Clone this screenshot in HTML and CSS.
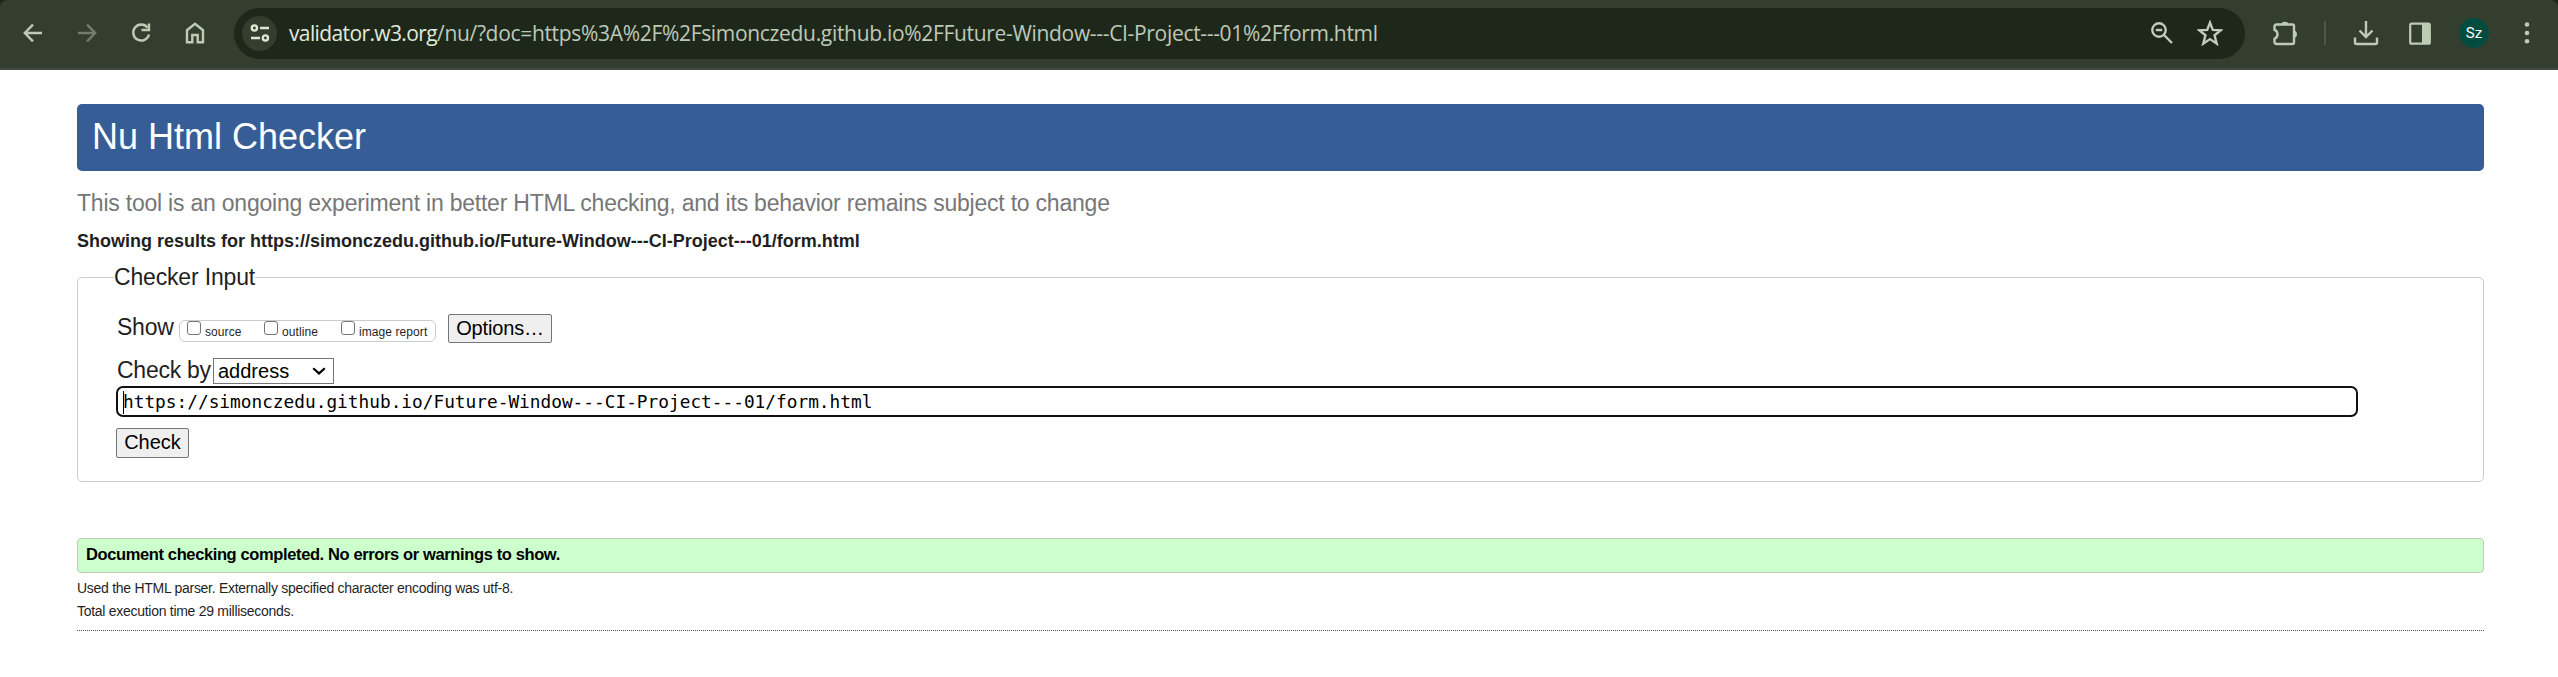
FILE: index.html
```html
<!DOCTYPE html>
<html lang="en">
<head>
<meta charset="utf-8">
<title>Nu Html Checker</title>
<link rel="stylesheet" href="styles.css">
</head>
<body>
<div class="frame">
<header class="toolbar">
  <nav class="nav">
    <svg class="icon" viewBox="0 0 24 24"><path d="M21 12H4M12 3.6 3.8 12 12 20.4"/></svg>
    <svg class="icon disabled" viewBox="0 0 24 24"><path d="M3 12H20M12 3.6 20.2 12 12 20.4"/></svg>
    <svg class="icon" viewBox="0 0 24 24"><path d="M18.5 6.5A8 8 0 1 0 20 13.5M20 2.5V9H12.5"/></svg>
    <svg class="icon" viewBox="0 0 24 24"><path d="M4 21.2V9.2L12 2.8L20 9.2V21.2H14.7V14H9.3V21.2Z"/></svg>
  </nav>
  <div class="omnibox">
    <span class="site"><svg class="tune" viewBox="0 0 20 20"><circle cx="4.4" cy="5" r="2.6"/><path d="M10 5H19M1 15H10"/><circle cx="15.4" cy="15" r="2.6"/></svg></span>
    <span class="url"><b class="host">validator.w3.org</b>/nu/?doc=https%3A%2F%2Fsimonczedu.github.io%2FFuture-Window---CI-Project---01%2Fform.html</span>
    <svg class="magnifier" viewBox="0 0 24 24"><circle cx="9" cy="9" r="6.7"/><path d="M14 14 22 22M5.8 9H12.2"/></svg>
    <svg class="star" viewBox="0 0 24 24"><path d="M12 2.4 14.6 9.1 22 9.5 16.2 14.1 18.2 21.8 12 17.6 5.8 21.8 7.8 14.1 2 9.5 9.4 9.1Z"/></svg>
  </div>
  <svg class="ext" viewBox="0 0 26 26"><path d="M4.5 4.5H20.5Q22 4.5 22 6V22.500Q22 24 20.500 24H4.500Q2.500 24 2.500 22V18.800Q5.500 17.500 5.500 14.200T2.500 9.800V6.500Q2.500 4.500 4.500 4.500Z"/><path class="solid" d="M9 4A4 3.600 0 0 1 16.500 4ZM22 10.500A3.500 3.700 0 0 1 22 17.800Z"/></svg>
  <span class="divider"></span>
  <svg class="download" viewBox="0 0 26 26"><path d="M13 1V16M6.500 10.500 13 17 19.500 10.500M2 17.500V22.500Q2 24 3.500 24H22.500Q24 24 24 22.500V17.500"/></svg>
  <svg class="panel" viewBox="0 0 22 23"><rect x="1.200" y="1.700" width="19.600" height="20" rx="1.500"/><path class="solid" d="M13 1H21V22H13Z"/></svg>
  <span class="avatar">Sz</span>
  <svg class="dots" viewBox="0 0 6 24"><circle cx="3" cy="3.500" r="2.300"/><circle cx="3" cy="12" r="2.300"/><circle cx="3" cy="20.300" r="2.300"/></svg>
</header>
</div>
<main class="page">
  <h1 class="banner">Nu Html Checker</h1>
  <p class="subtitle">This tool is an ongoing experiment in better HTML checking, and its behavior remains subject to change</p>
  <h2 class="results">Showing results for https://simonczedu.github.io/Future-Window---CI-Project---01/form.html</h2>
  <fieldset class="checker">
    <legend class="legend">Checker Input</legend>
    <div class="show-row">
      <span class="label show">Show</span>
      <div class="toggles">
        <label class="toggle source"><span class="box"></span>source</label>
        <label class="toggle outline"><span class="box"></span>outline</label>
        <label class="toggle"><span class="box"></span>image report</label>
      </div>
      <button class="button options">Options…</button>
    </div>
    <div class="by-row">
      <span class="label by">Check by</span>
      <div class="select">address<svg class="chevron" viewBox="0 0 14 8"><path d="M1.200 1.200 7 6.400 12.800 1.200"/></svg></div>
    </div>
    <div class="address"><span class="caret"></span>https://simonczedu.github.io/Future-Window---CI-Project---01/form.html</div>
    <button class="button check">Check</button>
  </fieldset>
  <p class="success">Document checking completed. No errors or warnings to show.</p>
  <p class="detail parser">Used the HTML parser. Externally specified character encoding was utf-8.</p>
  <p class="detail time">Total execution time 29 milliseconds.</p>
  <hr class="rule">
</main>
</body>
</html>
```
FILE: styles.css
```css
* { box-sizing: border-box; }
body { margin: 0; background: #fff; color: #1f1f1f; font-family: "Liberation Sans", Arial, sans-serif; }
h1, h2, p { margin: 0; }
svg { display: block; flex: none; fill: none; stroke: #bdcbb5; stroke-width: 2.4; }
.solid { fill: #bdcbb5; stroke: none; }
.frame { background: #1d281a; }
.toolbar { display: flex; align-items: center; height: 70px; padding: 0 0 2px 21px; background: #343e2e; border-bottom: 2px solid #42483f; border-radius: 8px 8px 0 0; }
.nav { display: flex; gap: 30px; width: 213px; }
.icon { width: 24px; height: 24px; }
.disabled { opacity: .45; }
.omnibox { display: flex; align-items: center; width: 2011px; height: 51px; padding: 0 22px 0 8px; border-radius: 26px; background: #1d281a; }
.site { display: flex; align-items: center; justify-content: center; width: 35px; height: 35px; border-radius: 50%; background: #343e2e; }
.tune { width: 20px; height: 20px; stroke: #dce7d4; }
.url { margin-left: 12px; font: 21px/30px "Open Sans", sans-serif; letter-spacing: -.32px; color: #bfc8b8; white-space: nowrap; }
.host { font-weight: 400; letter-spacing: -.62px; color: #e2eadb; }
.magnifier { width: 24px; height: 24px; margin-left: auto; stroke: #c4cabe; }
.star { width: 26px; height: 26px; margin-left: 23px; stroke: #c4cabe; stroke-width: 2.2; }
.ext { width: 26px; height: 26px; margin-left: 27px; }
.divider { width: 2px; height: 24px; margin-left: 26px; background: #4c5947; }
.download { width: 26px; height: 26px; margin-left: 27px; }
.panel { width: 22px; height: 23px; margin-left: 30px; stroke-width: 2.2; }
.avatar { width: 30px; height: 30px; margin-left: 28px; border-radius: 50%; background: #004d40; color: #fff; font: 15px/30px Roboto, sans-serif; text-align: center; }
.dots { width: 6px; height: 24px; margin-left: 35px; fill: #bdcbb5; stroke: none; }
.page { padding: 34px 74px 0 77px; }
.banner { height: 67px; padding-left: 15px; border-radius: 5px; background: #365d95; color: #fff; font-size: 36px; font-weight: 400; line-height: 65px; }
.subtitle { margin-top: 17px; color: #777; font-size: 23px; line-height: 30px; letter-spacing: -.22px; }
.results { margin-top: 11px; font-size: 18px; line-height: 24px; }
.checker { height: 218px; margin: 11px 0 0; padding: 24px 0 0 39px; border: 1px solid #ccc; border-radius: 5px; }
.legend { margin-left: -3px; padding: 0; font-size: 23px; line-height: 26px; letter-spacing: -.17px; }
.show-row { display: flex; height: 44px; }
.label { font-size: 23px; line-height: 24px; letter-spacing: -.25px; }
.show { width: 62px; padding-top: 1px; }
.toggles { display: flex; width: 257px; height: 22px; margin-top: 6px; padding-left: 7px; border: 1px solid #ccc; border-radius: 6px; }
.toggle { display: flex; gap: 4px; font-size: 12px; line-height: 22px; letter-spacing: .08px; white-space: nowrap; }
.source, .outline { width: 77px; }
.box { width: 14px; height: 14px; border: 1px solid #767676; border-radius: 3px; background: #fff; }
.button { display: block; margin: 0; padding: 0 0 2px; border: 1px solid #767676; border-radius: 2px; background: #efefef; color: #000; font: 20px/24px "Liberation Sans", Arial, sans-serif; }
.options { width: 104px; height: 29px; margin-left: 12px; letter-spacing: -.15px; }
.by-row { display: flex; height: 28px; }
.by { width: 96px; }
.select { display: flex; align-items: center; justify-content: space-between; width: 121px; height: 26px; padding: 0 7px 0 4px; border: 1px solid #767676; color: #000; font-size: 20px; line-height: 24px; }
.chevron { width: 14px; height: 8px; stroke: #000; stroke-width: 2.2; }
.address { display: flex; align-items: center; width: 2242px; height: 31px; margin-left: -1px; padding: 1px 0 0 5px; border: 2px solid #101010; border-radius: 7px; color: #000; font: 17.8px/26px "DejaVu Sans Mono", monospace; white-space: pre; }
.caret { width: 1px; height: 23px; margin-right: -1px; background: #000; }
.check { width: 73px; height: 30px; margin: 11px 0 0 -1px; padding-bottom: 3px; }
.success { height: 35px; margin-top: 56px; padding-left: 8px; border: 1px solid #bbccbb; border-radius: 4px; background: #cfc; color: #000; font-size: 16.5px; font-weight: 700; line-height: 31px; letter-spacing: -.38px; }
.detail { font-size: 14px; line-height: 22px; letter-spacing: -.28px; }
.parser { margin-top: 4px; }
.time { margin-top: 1px; }
.rule { height: 1px; margin: 8px 0 0; border: 0; background: repeating-linear-gradient(90deg, #555 0 1px, #fff 1px 2px); }
```
